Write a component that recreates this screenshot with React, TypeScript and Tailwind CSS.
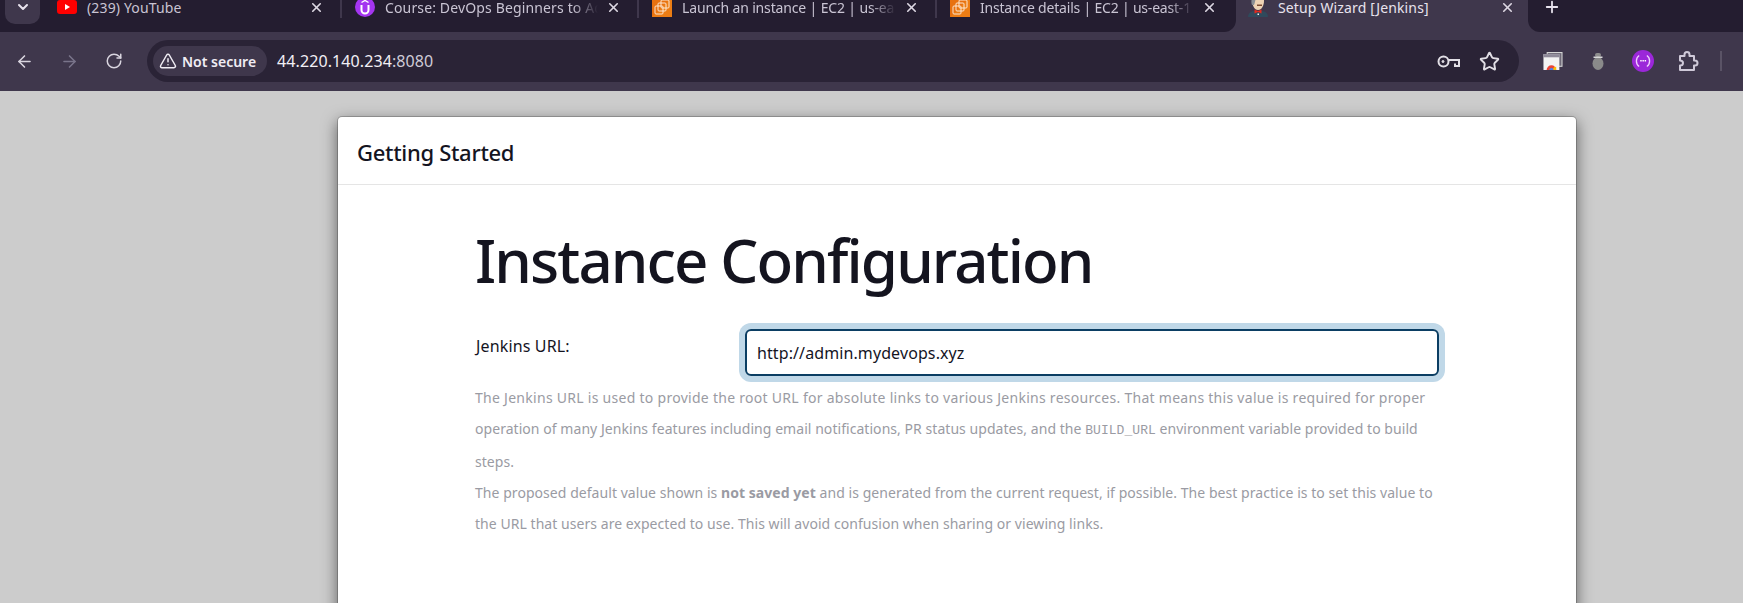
import { ArrowLeft, ArrowRight, Plus, RotateCw, Star, X, TriangleAlert, ChevronDown } from "lucide-react";

const font = "font-['Noto_Sans','Open_Sans',sans-serif]";

const YouTubeIcon = () => (
  <svg width="20" height="14" viewBox="0 0 20 14">
    <rect width="20" height="14" rx="3" fill="#f00" />
    <path d="M8 4l5 3-5 3z" fill="#fff" />
  </svg>
);

const UdemyIcon = () => (
  <svg width="20" height="20" viewBox="0 0 20 20">
    <circle cx="10" cy="10" r="10" fill="#a435f0" />
    <path d="M6.500 8v5a3.500 3.500 0 0 0 7 0V8" fill="none" stroke="#fff" strokeWidth="2" />
    <path d="M6.500 5.500L10 3.500l3.500 2" fill="none" stroke="#fff" strokeWidth="1.400" />
  </svg>
);

const Ec2Icon = () => (
  <svg width="20" height="20" viewBox="0 0 20 20">
    <rect width="20" height="20" fill="#e8710f" />
    <path d="M0 20L20 0v20z" fill="#f08a1a" opacity="0.5" />
    <g fill="none" stroke="#fde6cf" strokeWidth="1">
      <rect x="3" y="9" width="8" height="8" rx="1" />
      <rect x="6" y="6" width="8" height="8" rx="1" />
      <rect x="9" y="3" width="8" height="8" rx="1" />
    </g>
  </svg>
);

const JenkinsIcon = () => (
  <svg width="20" height="20" viewBox="0 0 20 20">
    <path d="M0 20c0-3 2-5.500 6-6h8c4 .5 6 3 6 6z" fill="#2f4a5c" />
    <path d="M4 2c0-3 4-5 7-5s5 3 5 7-2 9-6 9-6-5-6-11z" fill="#eed3b4" />
    <path d="M4 8c-2-5 1-11 6-11 1 2-1 4-2 5s-1 4-2 6z" fill="#8a8f94" />
    <path d="M9 7.500h5v1.500H9z" fill="#7a4a32" />
    <path d="M6.500 12.500l3.500 1.500 3.500-1.500v4l-3.500-1.500-3.500 1.500z" fill="#e02b20" />
    <rect x="9.500" y="16.500" width="1.500" height="1.500" fill="#f0f0f0" />
  </svg>
);

const ChromeWindowsIcon = () => (
  <svg width="20" height="18" viewBox="0 0 18 17">
    <rect x="3.500" y=".5" width="14" height="13" fill="#6f6a78" stroke="#d6d6d6" strokeWidth="1" />
    <rect x="0" y="2" width="15" height="15" fill="#f3f3f3" />
    <rect x="0" y="2" width="15" height="3" fill="#8f8a99" />
    <path d="M3 17a4.500 4.500 0 0 1 9 0z" fill="#ea4335" />
    <path d="M9 17a3 3 0 0 1 3-3v3z" fill="#fbbc05" />
    <path d="M5.500 17a2 2 0 0 1 4 0z" fill="#4285f4" />
  </svg>
);

const BugIcon = () => (
  <svg width="12" height="17" viewBox="0 0 12 17">
    <rect x="3" y="0" width="6" height="4" rx="2" fill="#8e8e8e" />
    <ellipse cx="6" cy="10.500" rx="5.500" ry="6.500" fill="#8a8a8a" />
    <rect x="1.500" y="3.500" width="9" height="1.500" fill="#d8d8d8" />
  </svg>
);

const DotsIcon = () => (
  <svg width="22" height="22" viewBox="0 0 20 20">
    <circle cx="10" cy="10" r="10" fill="#9b27d9" />
    <path d="M6.500 5c-1.500 1-2.500 3-2.500 5s1 4 2.500 5M13.500 5c1.500 1 2.500 3 2.500 5s-1 4-2.500 5" fill="none" stroke="#f0d0ff" strokeWidth="1.200" />
    <path d="M7.500 9.800h1.300M9.500 9.800h1.300M11.500 9.800h1.300" stroke="#fff" strokeWidth="1.500" />
  </svg>
);

const KeyIcon = () => (
  <svg width="23" height="13" viewBox="0 0 23 13" fill="none" stroke="#e2dfe6" strokeWidth="2">
    <circle cx="6.500" cy="6.500" r="5" />
    <circle cx="6" cy="6.500" r="1" fill="#e2dfe6" strokeWidth="1" />
    <path d="M11.500 5h10.500v6h-4V8.500" />
  </svg>
);

const PuzzleIcon = () => (
  <svg width="21" height="20" viewBox="0 0 21 20" fill="none" stroke="#cfc9d8" strokeWidth="2" strokeLinejoin="round">
    <path d="M2 5h4.500V3.500a2.500 2.500 0 0 1 5 0V5H16v4.500h1a2.500 2.500 0 0 1 0 5h-1V19H2v-4.500c2 0 3-1 3-2.500s-1-2.500-3-2.500z" />
  </svg>
);

const Tab = ({ icon, title, width, active, fade, noDivider, spacing = "tracking-[0.14px]" }: { icon: React.ReactNode; title: string; width: string; active?: boolean; fade?: boolean; noDivider?: boolean; spacing?: string }) => (
  <div className={`flex items-center h-8 pb-[18px] shrink-0 relative ${width} ${active ? "bg-[#3f374c] text-[#e8e3ee] pl-[12px] pr-[13px]" : "text-[#c9c4d3] pl-[13px] pr-[18px]"}`}>
    <div className="w-5 flex justify-center shrink-0">{icon}</div>
    <span className={`ml-[10px] flex-1 overflow-hidden whitespace-nowrap text-[14px] ${spacing} ${fade ? "[mask-image:linear-gradient(to_right,black_88%,transparent)]" : ""}`}>{title}</span>
    <X className="ml-2 shrink-0 text-[#ddd8e3]" size={15} strokeWidth={2.6} />
    {!active && !noDivider && <div className="absolute right-0 top-0 h-[18px] w-[2px] bg-[#3f374c]" />}
  </div>
);

export default function App() {
  return (
    <div className={`h-[603px] w-[1743px] overflow-hidden bg-[#cccccc] flex flex-col ${font}`}>
      {/* tab strip */}
      <div className="h-8 bg-[#3f374c] flex shrink-0">
        <div className="w-[1236px] bg-[#241d30] rounded-br-[12px] flex pl-[5px]">
          <div className="w-[35px] h-6 bg-[#3f374c] rounded-b-[10px] flex items-center justify-center shrink-0 pb-[10px]">
            <ChevronDown size={16} strokeWidth={3} className="text-[#e8e3ee]" />
          </div>
          <div className="flex ml-[4px]">
            <Tab icon={<YouTubeIcon />} title="(239) YouTube" width="w-[298px]" />
            <Tab icon={<UdemyIcon />} title="Course: DevOps Beginners to Ad" width="w-[297px]" fade />
            <Tab icon={<Ec2Icon />} title="Launch an instance | EC2 | us-ea" width="w-[298px]" spacing="tracking-[-0.15px]" fade />
            <Tab icon={<Ec2Icon />} title="Instance details | EC2 | us-east-1" width="w-[298px]" spacing="tracking-[-0.2px]" fade noDivider />
          </div>
        </div>
        <Tab icon={<JenkinsIcon />} title="Setup Wizard [Jenkins]" width="w-[292px]" active />
        <div className="flex-1 bg-[#241d30] rounded-bl-[12px] flex pl-[15px] pb-[18px] items-center">
          <Plus size={18} strokeWidth={2.4} className="text-[#e8e3ee]" />
        </div>
      </div>
      {/* toolbar */}
      <div className="h-[59px] bg-[#3f374c] flex items-center shrink-0 pb-[1px]">
        <div className="w-[147px] flex items-center shrink-0 pl-[15px] gap-[26px]">
          <ArrowLeft size={19} className="text-[#d9d5df]" />
          <ArrowRight size={19} className="text-[#79748a]" />
          <RotateCw size={18} className="text-[#d9d5df]" />
        </div>
        <div className="w-[1372px] h-[42px] rounded-full bg-[#2a2336] flex items-center pl-[6px] pr-[19px] shrink-0">
          <div className="w-[114px] h-[30px] rounded-full bg-[#3f374c] flex items-center pl-[6px] text-[#f0edf4] shrink-0">
            <TriangleAlert size={18} />
            <span className="ml-[5px] text-[14px] font-semibold whitespace-nowrap">Not secure</span>
          </div>
          <span className="ml-[10px] text-[16px] tracking-[0.1px] text-[#f2eff5]">
            44.220.140.234<span className="text-[#cfcbd6]">:8080</span>
          </span>
          <div className="ml-auto flex items-center gap-[19px]">
            <KeyIcon />
            <Star size={21} strokeWidth={2.2} className="text-[#e2dfe6]" />
          </div>
        </div>
        <div className="flex items-center pl-[24px]">
          <ChromeWindowsIcon />
          <div className="ml-[29px]"><BugIcon /></div>
          <div className="ml-[28px]"><DotsIcon /></div>
          <div className="ml-[24px]"><PuzzleIcon /></div>
          <div className="ml-[21px] w-[2px] h-[20px] bg-[#5a5366]" />
        </div>
      </div>
      {/* page */}
      <div className="flex-1 min-h-0 pl-[337px] pt-[25px]">
        <div className="w-[1240px] h-[600px] bg-white bg-clip-padding border border-black/20 rounded-[5px] shadow-[0_5px_15px_rgba(0,0,0,0.5)]">
          <div className="h-[68px] border-b border-[#e5e5e5] flex items-center pl-[19px] pt-[3px]">
            <h4 className="text-[22px] font-medium tracking-[-0.3px] text-[#14141f]">Getting Started</h4>
          </div>
          <div className="pl-[137px] pr-[137px]">
            <h1 className="mt-[33px] text-[60px] leading-[84px] font-[550] tracking-[-1.9px] text-[#14141f] whitespace-nowrap">Instance Configuration</h1>
            <div className="flex mt-[26px] items-start">
              <label className="w-[270px] shrink-0 pl-[1px] text-[16px] tracking-[0.15px] text-[#14141f] pt-[6px]">Jenkins URL:</label>
              <input
                readOnly
                value="http://admin.mydevops.xyz"
                className="mt-[1px] w-[694px] h-[47px] px-[10px] rounded-[6px] border-2 border-[#0b3e63] ring-[6px] ring-[#c0d8e8] text-[16px] tracking-[0.1px] text-[#14141f] outline-none"
              />
            </div>
            <div className="mt-[6px] text-[14px] leading-[31px] tracking-[0.05px] text-[#9a9ba3] whitespace-nowrap">
              <p>
                <span className="tracking-[0.28px]">The Jenkins URL is used to provide the root URL for absolute links to various Jenkins resources. That means this value is required for proper</span>
                <br />
                operation of many Jenkins features including email notifications, PR status updates, and the <code className="font-['Liberation_Mono',monospace] text-[13px]">BUILD_URL</code> environment variable provided to build
                <br />
                steps.
              </p>
              <p>
                The proposed default value shown is <strong className="font-bold">not saved yet</strong> and is generated from the current request, if possible. The best practice is to set this value to
                <br />
                the URL that users are expected to use. This will avoid confusion when sharing or viewing links.
              </p>
            </div>
          </div>
        </div>
      </div>
    </div>
  );
}
